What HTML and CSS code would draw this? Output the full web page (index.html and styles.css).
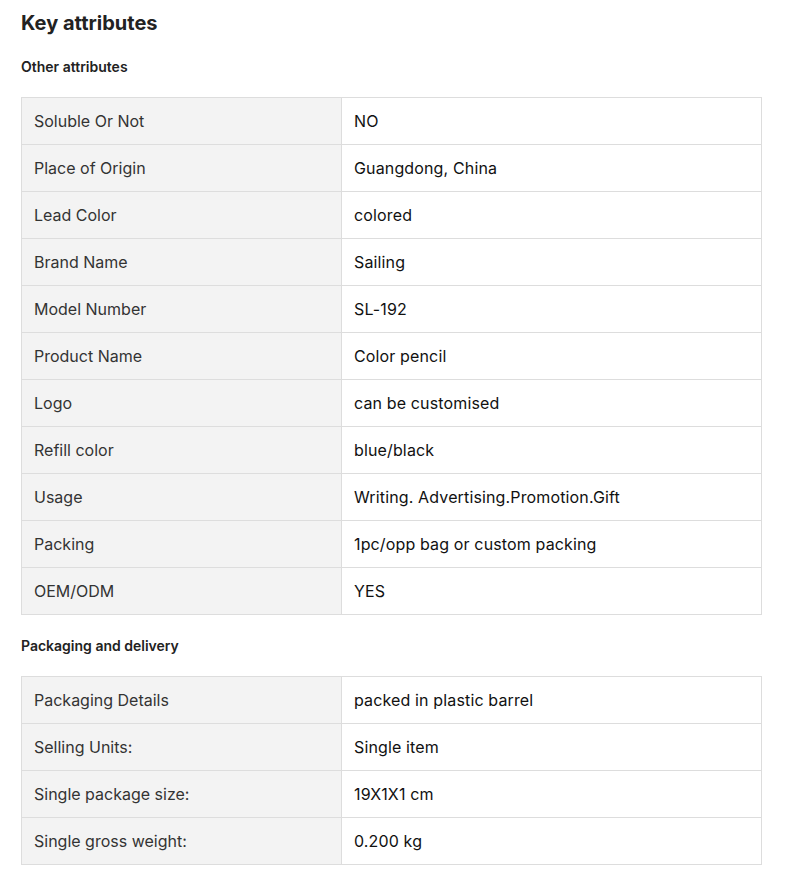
FILE: index.html
```html
<!DOCTYPE html>
<html>
<head>
  <meta charset="UTF-8">
  <title>Key attributes</title>
  <link rel="stylesheet" href="styles.css">
</head>
<body>
  <div class="attributes">
    <h2>Key attributes</h2>

    <h3>Other attributes</h3>
    <table class="attr-table">
      <tr><td class="attr-name">Soluble Or Not</td><td class="attr-value">NO</td></tr>
      <tr><td class="attr-name">Place of Origin</td><td class="attr-value">Guangdong, China</td></tr>
      <tr><td class="attr-name">Lead Color</td><td class="attr-value">colored</td></tr>
      <tr><td class="attr-name">Brand Name</td><td class="attr-value">Sailing</td></tr>
      <tr><td class="attr-name">Model Number</td><td class="attr-value">SL-192</td></tr>
      <tr><td class="attr-name">Product Name</td><td class="attr-value">Color pencil</td></tr>
      <tr><td class="attr-name">Logo</td><td class="attr-value">can be customised</td></tr>
      <tr><td class="attr-name">Refill color</td><td class="attr-value">blue/black</td></tr>
      <tr><td class="attr-name">Usage</td><td class="attr-value">Writing. Advertising.Promotion.Gift</td></tr>
      <tr><td class="attr-name">Packing</td><td class="attr-value">1pc/opp bag or custom packing</td></tr>
      <tr><td class="attr-name">OEM/ODM</td><td class="attr-value">YES</td></tr>
    </table>

    <h3>Packaging and delivery</h3>
    <table class="attr-table">
      <tr><td class="attr-name">Packaging Details</td><td class="attr-value">packed in plastic barrel</td></tr>
      <tr><td class="attr-name">Selling Units:</td><td class="attr-value">Single item</td></tr>
      <tr><td class="attr-name">Single package size:</td><td class="attr-value">19X1X1 cm</td></tr>
      <tr><td class="attr-name">Single gross weight:</td><td class="attr-value">0.200 kg</td></tr>
    </table>
  </div>
</body>
</html>
```

FILE: styles.css
```css
body {
  margin: 0;
  font-family: Inter, "Noto Sans", sans-serif;
  color: #222;
  background-color: #fff;
}
.attributes {
  padding: 9px 21px 10px 21px;
}
h2 {
  margin: 0 0 20px 0;
  font-size: 20px;
  line-height: 28px;
  font-weight: 700;
  color: #222;
}
h3 {
  margin: 0 0 20px 0;
  font-size: 14px;
  line-height: 20px;
  font-weight: 600;
  color: #222;
}
.attr-table {
  width: 741px;
  border-collapse: collapse;
  margin-bottom: 21px;
}
.attr-table td {
  border: 1px solid #ddd;
  padding: 11px 12px;
  font-size: 16px;
  line-height: 24px;
}
.attr-name {
  width: 295px;
  background-color: #f3f3f3;
  color: #333;
}
.attr-value {
  color: #111;
  letter-spacing: 0.14px;
}
```
